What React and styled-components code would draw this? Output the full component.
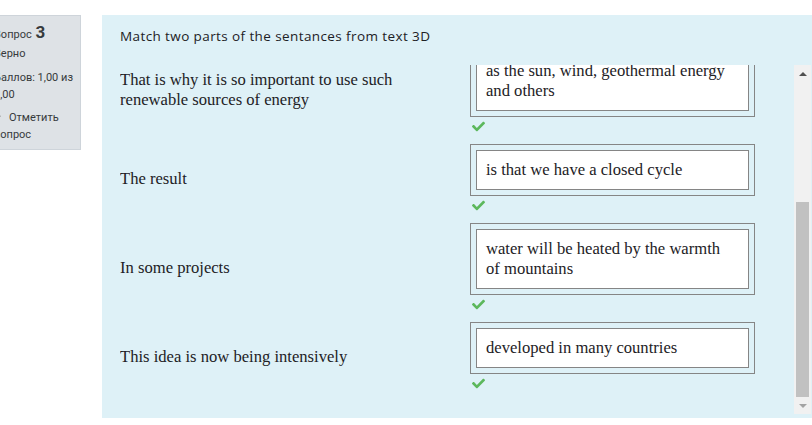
import React, { useLayoutEffect, useRef, useState } from 'react';
import styled, { createGlobalStyle } from 'styled-components';

const GlobalStyle = createGlobalStyle`
  html, body {
    margin: 0;
    padding: 0;
    background: #ffffff;
    overflow: hidden;
  }
`;

const Page = styled.div`
  display: flex;
  align-items: flex-start;
  gap: 21px;
  width: 812px;
  height: 425px;
  padding-top: 15px;
  box-sizing: border-box;
`;

const Info = styled.div`
  flex: none;
  width: 93px;
  margin-left: -12px;
  box-sizing: border-box;
  padding: 6px 5px 6px 5px;
  background: #dee2e6;
  border: 1px solid #ced4da;
  font-family: Roboto, "Liberation Sans", sans-serif;
  font-size: 11px;
  line-height: 17px;
  color: #373a3c;
`;

const QuestionNo = styled.div`
  height: 20px;
  line-height: 20px;
  margin-bottom: 3px;

  strong {
    font-size: 17px;
    font-weight: 700;
    margin-left: 1px;
  }
`;

const InfoLine = styled.div`
  margin-bottom: ${p => p.gap || 0}px;
`;

const Flag = styled.svg`
  width: 10px;
  height: 10px;
  margin: 0 7px 0 -2px;
  vertical-align: -1px;
`;

const Formulation = styled.div`
  flex: 1;
  height: 403px;
  box-sizing: border-box;
  padding: 11px 1px 4px 18px;
  background: #def1f7;
  display: flex;
  flex-direction: column;
`;

const Prompt = styled.div`
  font-family: "Open Sans", "Liberation Sans", sans-serif;
  font-size: 13.5px;
  letter-spacing: 0.4px;
  line-height: 20px;
  color: #1d2125;
  margin-bottom: 19px;
`;

const ScrollArea = styled.div`
  display: flex;
  height: 349px;
`;

const Viewport = styled.div`
  flex: 1;
  overflow: hidden;
`;

const Rows = styled.div`
  display: flex;
  flex-direction: column;
  gap: 9px;
  padding: 18px 0 22px;
`;

const Row = styled.div`
  display: flex;
  align-items: center;
`;

const Stem = styled.div`
  width: 350px;
  flex: none;
  box-sizing: border-box;
  padding-right: 10px;
  font-family: "Liberation Serif", "Times New Roman", serif;
  font-size: 16.6px;
  line-height: 20px;
  color: #1d2125;
`;

const Answer = styled.div`
  width: 285px;
  flex: none;
`;

const DropZone = styled.div`
  box-sizing: border-box;
  padding: 5px;
  border: 1px solid #858585;
`;

const Choice = styled.div`
  background: #ffffff;
  border: 1px solid #858585;
  padding: 9px 10px 9px 9px;
  font-family: "Liberation Serif", "Times New Roman", serif;
  font-size: 16.6px;
  line-height: 20px;
  color: #1d2125;
`;

const Feedback = styled.div`
  height: 18px;
  display: flex;
  align-items: center;
  padding-left: 2px;
`;

const Tick = styled.svg`
  width: 13px;
  height: 13px;
  fill: #5cb85c;
`;

const Scrollbar = styled.div`
  width: 17px;
  flex: none;
  background: #f1f1f1;
  display: flex;
  flex-direction: column;
`;

const Arrow = styled.div`
  height: 17px;
  flex: none;
  display: flex;
  align-items: center;
  justify-content: center;

  &::after {
    content: '';
    width: 0;
    height: 0;
    border-left: 4px solid transparent;
    border-right: 4px solid transparent;
    ${p => p.down
      ? `border-top: 4px solid ${p.muted ? '#a3a3a3' : '#505050'};`
      : `border-bottom: 4px solid ${p.muted ? '#a3a3a3' : '#505050'};`}
  }
`;

const Track = styled.div`
  flex: 1;
  display: flex;
  flex-direction: column;
  justify-content: flex-start;
  padding: 0 2px;
`;

const Thumb = styled.div`
  background: #c1c1c1;
`;

const pairs = [
  {
    stem: 'Scientists say that natural resources such as oil and gas',
    choice: 'will run out in the near future'
  },
  {
    stem: 'The Earth itself can supply us with',
    choice: 'clean energy of the hot water that is under the ground'
  },
  {
    stem: 'That is why it is so important to use such renewable sources of energy',
    choice: 'as the sun, wind, geothermal energy and others'
  },
  { stem: 'The result', choice: 'is that we have a closed cycle' },
  { stem: 'In some projects', choice: 'water will be heated by the warmth of mountains' },
  { stem: 'This idea is now being intensively', choice: 'developed in many countries' }
];

function Check() {
  return (
    <Tick viewBox="0 0 512 512">
      <path d="M173.9 439.4l-166.4-166.4c-10-10-10-26.2 0-36.2l36.2-36.2c10-10 26.2-10 36.2 0L192 312.7 432.1 72.6c10-10 26.2-10 36.2 0l36.2 36.2c10 10 10 26.2 0 36.2l-294.4 294.4c-10 10-26.2 10-36.2 0z" />
    </Tick>
  );
}

export default function App() {
  const viewport = useRef(null);
  const [thumb, setThumb] = useState({ top: 120, height: 195 });

  useLayoutEffect(() => {
    const el = viewport.current;
    if (!el) return;
    el.scrollTop = el.scrollHeight;
    const track = el.clientHeight - 34;
    const height = Math.round((el.clientHeight / el.scrollHeight) * track);
    const max = el.scrollHeight - el.clientHeight;
    const top = max > 0 ? Math.round((el.scrollTop / max) * (track - height)) : 0;
    setThumb({ top, height });
  }, []);

  return (
    <>
      <GlobalStyle />
      <Page>
        <Info>
          <QuestionNo>
            Вопрос <strong>3</strong>
          </QuestionNo>
          <InfoLine gap={7}>Верно</InfoLine>
          <InfoLine gap={6}>Баллов: 1,00 из 1,00</InfoLine>
          <InfoLine>
            <Flag viewBox="0 0 10 10">
              <path d="M1 1 L1 9.5 M1 1.5 L8.5 4.2 L1 7" fill="none" stroke="#9a9a9a" strokeWidth="1" />
            </Flag>
            Отметить вопрос
          </InfoLine>
        </Info>

        <Formulation>
          <Prompt>Match two parts of the sentances from text 3D</Prompt>
          <ScrollArea>
            <Viewport ref={viewport}>
              <Rows>
                {pairs.map(p => (
                  <Row key={p.stem}>
                    <Stem>{p.stem}</Stem>
                    <Answer>
                      <DropZone>
                        <Choice>{p.choice}</Choice>
                      </DropZone>
                      <Feedback>
                        <Check />
                      </Feedback>
                    </Answer>
                  </Row>
                ))}
              </Rows>
            </Viewport>
            <Scrollbar>
              <Arrow />
              <Track>
                <Thumb style={{ marginTop: thumb.top, height: thumb.height }} />
              </Track>
              <Arrow down muted />
            </Scrollbar>
          </ScrollArea>
        </Formulation>
      </Page>
    </>
  );
}
